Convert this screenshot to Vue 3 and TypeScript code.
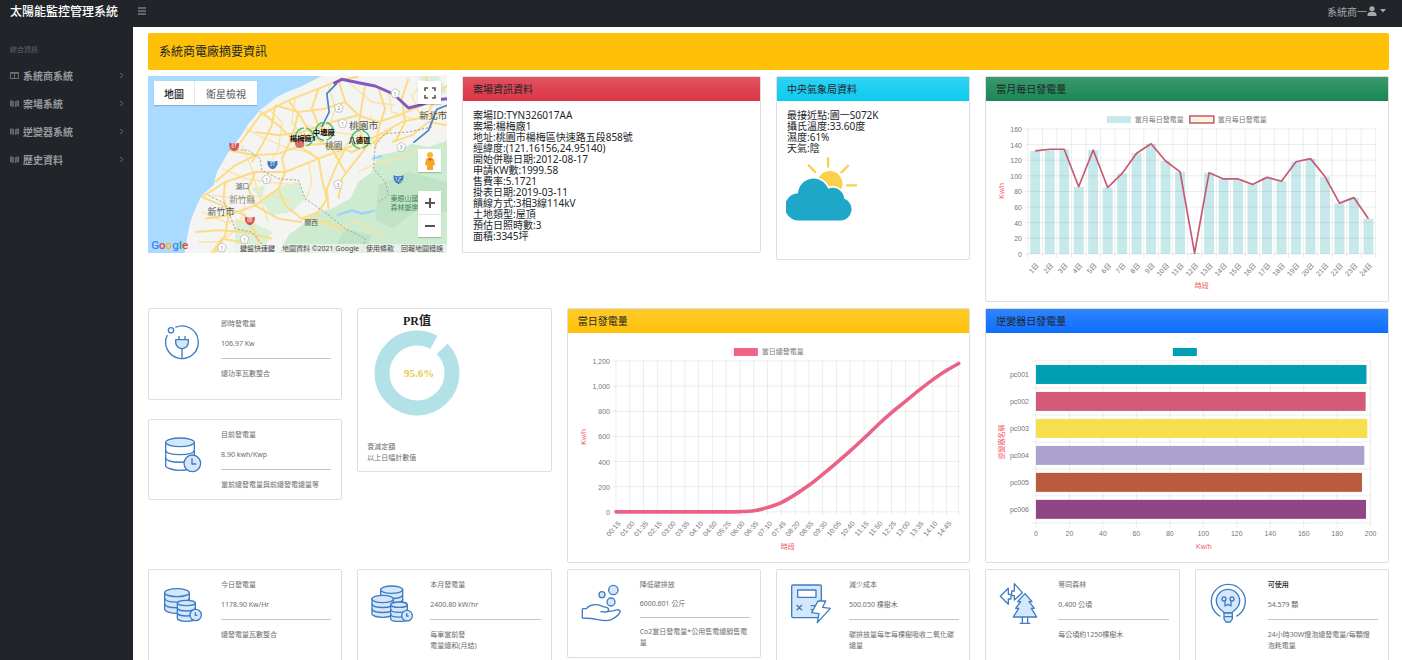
<script setup lang="ts">
import { computed } from 'vue'

interface Stat {
  icon: string
  label: string
  value: string
  note: string
  strong?: boolean
  compact?: boolean
}

const navItems = [
  { label: '系統商系統', icon: 'columns' },
  { label: '案場系統', icon: 'book' },
  { label: '逆變器系統', icon: 'book' },
  { label: '歷史資料', icon: 'book' },
]

const siteInfo = [
  '案場ID:TYN326017AA',
  '案場:楊梅廠1',
  '地址:桃園市楊梅區快速路五段858號',
  '經緯度:(121.16156,24.95140)',
  '開始併聯日期:2012-08-17',
  '申請KW數:1999.58',
  '售費率:5.1721',
  '掛表日期:2019-03-11',
  '饋線方式:3相3線114kV',
  '土地類型:屋頂',
  '預估日照時數:3',
  '面積:3345坪',
]

const weatherInfo = ['最接近點:園一S072K', '攝氏溫度:33.60度', '濕度:61%', '天氣:陰']

const liveStats: Stat[] = [
  { icon: 'plug', label: '即時發電量', value: '106.97 Kw', note: '總功率瓦數整合' },
  { icon: 'database', label: '目前發電量', value: '8.90 kwh/Kwp', note: '當前總發電量與前總發電總量等' },
]

const totals: Stat[] = [
  { icon: 'coins2', label: '今日發電量', value: '1178.90 Kw/Hr', note: '總發電量瓦數整合' },
  { icon: 'coins3', label: '本月發電量', value: '2400.80 kW/hr', note: '每單當前發\n電量總和(月結)' },
  { icon: 'hand', label: '降低碳排放', value: '6000.601 公斤', note: 'Co2當日發電量*公用售電總銷售電\n量', compact: true },
  { icon: 'calculator', label: '減少成本', value: '500.050 棵樹木', note: '碳排放量每年每棵樹吸收二氧化碳\n總量' },
  { icon: 'tree', label: '等同森林', value: '0.400 公頃', note: '每公頃約1250棵樹木' },
  { icon: 'bulb', label: '可使用', value: '54.579 顆', note: '24小時30W燈泡總發電量/每顆燈\n泡耗電量', strong: true },
]

// Monthly chart: one bar and one line point for each day
const month = { left: 42, right: 390, top: 28, bottom: 153 }
const monthValues = [132, 134, 134, 86, 133, 85, 103, 129, 141, 119, 105, 1, 104, 96, 96, 89, 98, 93, 118, 122, 99, 65, 72, 45]
const monthStep = (month.right - month.left) / monthValues.length
const monthY = (v: number) => month.bottom - (v / 160) * (month.bottom - month.top)
const monthTicks = [0, 20, 40, 60, 80, 100, 120, 140, 160]
const monthBars = monthValues.map((v, i) => ({
  label: `${i + 1}日`,
  x: month.left + i * monthStep,
  cx: month.left + (i + 0.5) * monthStep,
  y: monthY(v),
}))
const monthLine = monthBars.map((b) => `${b.cx},${b.y}`).join(' ')

// Daily chart: cumulative output by time of day
const day = { left: 48, right: 391, top: 28, bottom: 179 }
const dayLabels = [
  '00:15', '01:00', '01:35', '02:15', '03:00', '03:35', '04:10', '04:50', '05:25', '06:00', '06:35', '07:10', '07:45',
  '08:20', '08:55', '09:30', '10:05', '10:40', '11:15', '11:50', '12:25', '13:00', '13:35', '14:10', '14:45',
]
const dayValues = [0, 0, 0, 0, 0, 0, 0, 0, 0, 2, 9, 34, 74, 137, 211, 298, 390, 485, 585, 691, 789, 878, 968, 1052, 1126, 1180]
const dayStep = (day.right - day.left) / 24.87
const dayTicks = [0, 200, 400, 600, 800, 1000, 1200]
const dayX = (i: number) => Math.min(day.left + i * dayStep, day.right)
const dayY = (v: number) => day.bottom - (v / 1200) * (day.bottom - day.top)
const dayCurve = computed(() => {
  const pts = dayValues.map((v, i) => [dayX(i), dayY(v)])
  let d = `M${pts[0][0]} ${pts[0][1]}`
  for (let i = 0; i < pts.length - 1; i++) {
    const a = pts[Math.max(i - 1, 0)]
    const b = pts[i]
    const c = pts[i + 1]
    const e = pts[Math.min(i + 2, pts.length - 1)]
    d += ` C${b[0] + (c[0] - a[0]) / 6} ${b[1] + (c[1] - a[1]) / 6} ${c[0] - (e[0] - b[0]) / 6} ${c[1] - (e[1] - b[1]) / 6} ${c[0]} ${c[1]}`
  }
  return d
})

// Inverter chart: horizontal bars
const inv = { left: 50, right: 385, top: 28, bottom: 190 }
const inverters = [
  { name: 'pc001', value: 197.5, color: '#009fb1' },
  { name: 'pc002', value: 197, color: '#d45b78' },
  { name: 'pc003', value: 198, color: '#f5df4e' },
  { name: 'pc004', value: 196.2, color: '#aca2cd' },
  { name: 'pc005', value: 194.8, color: '#bb5a3f' },
  { name: 'pc006', value: 197.2, color: '#8f4684' },
]
const invTicks = [0, 20, 40, 60, 80, 100, 120, 140, 160, 180, 200]
const invX = (v: number) => inv.left + (v / 200) * (inv.right - inv.left)

// Donut: the ring leaves a gap of the missing share
const ringLength = 2 * Math.PI * 35
const ringDash = `${ringLength * 0.951} ${ringLength}`

const roads = [
  'M170 375 L240 330 L330 300 L420 300 L520 260 L600 230 L700 190 L770 150 L906 120',
  'M250 235 L330 250 L400 245 L470 220 L540 215 L620 240 L690 210 L740 170',
  'M285 213 L345 130 L430 85 L520 50 L580 25 L640 14',
  'M345 118 L400 160 L440 200 L480 235 L520 260',
  'M430 85 L470 140 L500 190 L560 230 L600 300',
  'M520 50 L500 110 L520 160 L560 200',
  'M580 25 L600 90 L640 130 L700 150 L760 130 L830 100',
  'M660 40 L650 100 L640 160 L660 230',
  'M700 50 L720 110 L700 170 L690 230',
  'M790 20 L770 80 L780 150 L750 210',
  'M600 90 L540 110 L460 120 L390 100',
  'M330 180 L400 190 L470 180 L560 150 L640 130',
  'M520 260 L530 320 L545 380 L520 420 L470 440',
  'M600 230 L570 290 L545 350 L550 410',
  'M660 230 L620 280 L590 320 L580 380',
  'M170 375 L230 400 L300 430 L330 480 L350 543',
  'M240 330 L235 380 L250 430 L240 490 L210 543',
  'M330 300 L310 350 L330 400 L400 440 L470 450',
  'M420 300 L400 350 L420 400 L470 440',
  'M180 440 L250 430 L330 400 L400 350',
  'M150 480 L220 475 L300 480 L380 500',
  'M210 330 L270 280 L330 250',
  'M390 100 L380 160 L350 220 L320 270',
  'M460 120 L440 200 L410 260 L420 300',
  'M850 120 L880 60 L906 40',
  'M830 100 L860 50 L840 12',
  'M470 440 L550 450 L600 480',
  'M200 543 L230 500 L290 510 L330 543',
  'M740 210 L800 190 L850 150 L906 160',
]
const minorRoads = [
  'M200 370 L280 380 L370 370 L450 390',
  'M230 290 L300 320 L370 330 L460 340',
  'M290 220 L320 290 L340 370 L370 450',
  'M370 110 L410 150 L400 230 L370 280',
  'M450 80 L440 150 L480 200',
  'M550 40 L570 110 L550 170',
  'M610 30 L680 90 L750 100',
  'M480 160 L560 180 L640 190 L700 210',
  'M570 260 L620 200 L680 130',
  'M490 270 L500 330 L480 390',
  'M170 420 L240 450 L330 450',
  'M160 510 L220 510 L280 470 L300 400',
  'M730 60 L740 120 L800 140',
  'M840 30 L800 70 L820 120 L880 140',
  'M300 170 L360 200 L430 230 L500 240',
  'M640 300 L700 270 L760 260 L830 230',
  'M500 425 L560 470 L640 450 L720 500',
]
const shields = [
  { x: 750, y: 64, n: '1' }, { x: 581, y: 108, n: '2' }, { x: 592, y: 154, n: '1' }, { x: 768, y: 225, n: '3' },
  { x: 364, y: 322, n: '1' }, { x: 579, y: 337, n: '3' }, { x: 298, y: 502, n: '1' }, { x: 230, y: 527, n: '1' },
]
const badges = [
  { x: 267, y: 224, n: '61', c: '#d9534f' }, { x: 382, y: 278, n: '31', c: '#3b78c4' },
  { x: 760, y: 322, n: '1乙', c: '#3b78c4' }, { x: 314, y: 446, n: '68', c: '#d9534f' },
]
</script>

<template>
  <div class="shell">
    <aside class="sidebar">
      <a class="brand" href="#">太陽能監控管理系統</a>
      <p class="nav-caption">綜合資訊</p>
      <nav>
        <a v-for="item in navItems" :key="item.label" class="nav-link" href="#">
          <svg v-if="item.icon === 'columns'" class="nav-icon" viewBox="0 0 16 16" aria-hidden="true">
            <path d="M1 2.500h14v11H1zM8 2.500v11M1 4h14" fill="none" stroke="currentColor" stroke-width="1.800" />
          </svg>
          <svg v-else class="nav-icon" viewBox="0 0 16 16" aria-hidden="true">
            <path d="M0 3q4-1 7 1v10q-3-2-7-1zM16 3q-4-1-7 1v10q3-2 7-1z" fill="currentColor" />
            <path d="M3.500 4v9M12.500 4v9" stroke="#212529" stroke-width="1" />
          </svg>
          <span>{{ item.label }}</span>
          <svg class="chevron" viewBox="0 0 8 10" aria-hidden="true">
            <path d="M2 1l4 4-4 4" fill="none" stroke="currentColor" stroke-width="1.600" />
          </svg>
        </a>
      </nav>
    </aside>

    <div class="page">
      <header class="topbar">
        <button class="icon-button" type="button" aria-label="選單">
          <svg viewBox="0 0 10 10" width="10" height="10"><path d="M1 2h8M1 5h8M1 8h8" stroke="currentColor" stroke-width="1.200" /></svg>
        </button>
        <button class="user-button" type="button">
          <span>系統商一</span>
          <svg viewBox="0 0 10 10" width="10" height="10" aria-hidden="true">
            <circle cx="5" cy="2.800" r="2.600" fill="currentColor" />
            <path d="M.5 10V8.500q0-2.300 2.500-2.500h4q2.500.2 2.500 2.500V10z" fill="currentColor" />
          </svg>
          <svg class="caret" viewBox="0 0 6 4" width="6" height="4" aria-hidden="true"><path d="M0 0h6L3 3.500z" fill="currentColor" /></svg>
        </button>
      </header>

      <main class="content">
        <h1 class="banner">系統商電廠摘要資訊</h1>

        <section class="grid">
          <div class="map span-3">
            <svg class="map-art" viewBox="8 12 898 531" preserveAspectRatio="xMidYMid slice" aria-hidden="true">
              <rect x="8" y="12" width="898" height="531" fill="#a9daff" />
              <path d="M530 12 L465 45 L430 58 L395 75 L345 114 L310 155 L285 195 L250 240 L215 300 L205 340 L170 370 L155 400 L135 450 L125 500 L118 543 H906 V12 Z" fill="#f4f4f2" />
              <path d="M906 205 L850 225 L800 215 L750 240 L700 250 L680 300 L640 330 L615 380 L560 410 L500 425 L470 460 L430 490 L400 543 H906 Z" fill="#cdebcf" />
              <path d="M400 345 L460 330 L480 380 L440 420 L380 430 L350 390 Z M270 440 L330 455 L380 480 L350 543 L270 543 Z M820 12 L880 12 L906 60 L860 80 Z M320 350 L360 340 L350 380 Z" fill="#d9f0d8" />
              <path d="M700 340 L790 300 L906 330 L906 420 L820 410 L740 470 L690 440 Z M600 470 L680 490 L660 543 L560 543 Z" fill="#bfe3c4" />
              <g fill="none" stroke="#f9e4a6" stroke-width="4">
                <path v-for="r in minorRoads" :key="r" :d="r" />
              </g>
              <g fill="none" stroke="#fbdc85" stroke-width="6" stroke-linejoin="round">
                <path v-for="r in roads" :key="r" :d="r" />
              </g>
              <g fill="none" stroke="#a5a5a5" stroke-width="3" stroke-dasharray="7 5">
                <path d="M250 232 L310 235 L345 260 L350 295 L400 320 L460 325 L480 380 L545 425 L600 470 L660 500 L650 543" />
                <path d="M860 165 L790 180 L720 185 L690 220 L685 290 L720 330 L730 370 L700 390" />
                <path d="M190 370 L240 395 L270 470 L320 480 L370 540" />
              </g>
              <path d="M575 430 L620 415 L650 425 L690 415 M680 260 l30 -8" fill="none" stroke="#9fd3f8" stroke-width="7" />
              <path d="M565 35 L590 22 L640 32 L690 42 L745 66 L790 108 L830 98 L860 85 L906 80" fill="none" stroke="#8358c4" stroke-width="9" stroke-linejoin="round" />
              <path d="M575 34 L545 65 L552 120 L530 165 M906 100 L875 112 L850 175 L805 212" fill="none" stroke="#4a7fc6" stroke-width="5" stroke-linejoin="round" />
              <g v-for="s in shields" :key="`${s.x}`">
                <path :d="`M${s.x} ${s.y - 14} l13 9 -5 17 h-16 l-5 -17 z`" fill="#fff" stroke="#a9b3a6" stroke-width="2" />
                <text :x="s.x" :y="s.y + 7" class="shield-text" fill="#777">{{ s.n }}</text>
              </g>
              <g v-for="b in badges" :key="b.n">
                <path :d="`M${b.x - 15} ${b.y - 12} q15 6 30 0 q2 20 -15 26 q-17 -6 -15 -26`" :fill="b.c" />
                <text :x="b.x" :y="b.y + 5" class="shield-text" fill="#fff">{{ b.n }}</text>
              </g>
              <g class="place">
                <text x="822" y="140" font-size="28">新北市</text>
                <text x="612" y="172" font-size="29">桃園市</text>
                <text x="540" y="230" font-size="26">桃園</text>
                <text x="272" y="352" font-size="20">湖口</text>
                <text x="252" y="392" font-size="26" fill="#8d8d8d">新竹縣</text>
                <text x="187" y="428" font-size="27">新竹市</text>
                <text x="478" y="458" font-size="20">關西</text>
                <text x="736" y="388" font-size="21" fill="#3d8a56">東眼山國</text>
                <text x="736" y="414" font-size="21" fill="#3d8a56">森林遊樂</text>
              </g>
              <g fill="none" stroke="#35c172" stroke-width="4" stroke-dasharray="36 8">
                <circle cx="478" cy="195" r="27" /><circle cx="538" cy="178" r="27" /><circle cx="646" cy="202" r="27" />
              </g>
              <circle cx="463" cy="214" r="14" fill="#d9705d" />
              <path d="M478 182 l8 18 h-16z M538 165 l8 20 h-16z M646 190 l8 18 h-16z" fill="#ef9a3c" />
              <g class="marker">
                <text x="434" y="208">楊梅廠1</text>
                <text x="503" y="189">中壢廠</text>
                <text x="610" y="213">八德區</text>
              </g>
              <text x="18" y="531" class="google">
                <tspan fill="#4285f4">G</tspan><tspan fill="#ea4335">o</tspan><tspan fill="#fbbc05">o</tspan><tspan fill="#4285f4">g</tspan><tspan fill="#34a853">l</tspan><tspan fill="#ea4335">e</tspan>
              </text>
            </svg>
            <div class="map-type">
              <button type="button" class="active">地圖</button>
              <button type="button">衛星檢視</button>
            </div>
            <div class="map-side">
              <button type="button" class="map-square" aria-label="全螢幕">
                <svg viewBox="0 0 12 12" width="12" height="12"><path d="M1 4V1h3M8 1h3v3M11 8v3H8M4 11H1V8" fill="none" stroke="#555" stroke-width="1.600" /></svg>
              </button>
              <button type="button" class="map-square pegman" aria-label="街景服務">
                <svg viewBox="0 0 12 20" width="12" height="20">
                  <circle cx="6" cy="4" r="3" fill="#fbb829" />
                  <path d="M2 8q4-2 8 0l1 6-2 .5V19H3v-4.500L1 14z" fill="#f5a623" />
                  <path d="M3.500 7.500h5L6 10z" fill="#d4572e" />
                </svg>
              </button>
              <div class="map-zoom">
                <button type="button" aria-label="放大"><svg viewBox="0 0 12 12" width="12" height="12"><path d="M6 1v10M1 6h10" stroke="#555" stroke-width="2" /></svg></button>
                <button type="button" aria-label="縮小"><svg viewBox="0 0 12 12" width="12" height="12"><path d="M1 6h10" stroke="#555" stroke-width="2" /></svg></button>
              </div>
            </div>
            <div class="map-credit">
              <button type="button">鍵盤快速鍵</button>
              <span>地圖資料 ©2021 Google</span>
              <a href="#">使用條款</a>
              <a href="#">回報地圖錯誤</a>
            </div>
          </div>

          <article class="card span-3 site-card">
            <h2 class="card-header red">案場資訊資料</h2>
            <ul class="facts">
              <li v-for="line in siteInfo" :key="line">{{ line }}</li>
            </ul>
          </article>

          <article class="card span-2 weather-card">
            <h2 class="card-header cyan">中央氣象局資料</h2>
            <ul class="facts">
              <li v-for="line in weatherInfo" :key="line">{{ line }}</li>
            </ul>
            <svg class="weather-icon" viewBox="48 254 214 192" role="img" aria-label="多雲時晴">
              <path d="M175 257v26M117 279l19 20M235 280l-20 20M232 339h28" stroke="#fccf4d" stroke-width="7" stroke-linecap="round" fill="none" />
              <circle cx="180" cy="334" r="38" fill="#fccf4d" />
              <path d="M88 445 a40 40 0 0 1 -4 -82 a47 47 0 0 1 91 -14 a34 34 0 0 1 48 30 a34 34 0 0 1 -12 66 z" fill="#1fa7c9" stroke="#fff" stroke-width="10" />
              <path d="M88 445 a40 40 0 0 1 -4 -82 a47 47 0 0 1 91 -14 a34 34 0 0 1 48 30 a34 34 0 0 1 -12 66 z" fill="#1fa7c9" />
            </svg>
          </article>

          <article class="card span-4">
            <h2 class="card-header green">當月每日發電量</h2>
            <svg class="chart" viewBox="0 0 402 200" role="img" aria-label="當月每日發電量">
              <rect x="121" y="15" width="24" height="7" fill="#c7e9ec" />
              <text x="149" y="21">當月每日發電量</text>
              <rect x="204" y="15" width="24" height="7" fill="#fff5dd" stroke="#c4566e" stroke-width="1.500" />
              <text x="232" y="21">當月每日發電量</text>
              <rect v-for="b in monthBars" :key="b.label" :x="b.cx - 5" :y="b.y" width="10" :height="month.bottom - b.y" fill="#c7e9ec" />
              <g class="lines">
                <path v-for="t in monthTicks" :key="t" :d="`M${month.left - 3} ${monthY(t)}H${month.right}`" />
                <path v-for="b in monthBars" :key="b.label" :d="`M${b.x} ${month.top}V${month.bottom + 4}`" />
                <path :d="`M${month.right} ${month.top}V${month.bottom + 4}`" />
              </g>
              <polyline :points="monthLine" fill="none" stroke="#c65a72" stroke-width="1.700" stroke-linejoin="round" />
              <g class="end">
                <text v-for="t in monthTicks" :key="t" x="36" :y="monthY(t) + 3">{{ t }}</text>
                <text v-for="b in monthBars" :key="b.label" :transform="`translate(${b.cx + 4} ${month.bottom + 12}) rotate(-48)`">{{ b.label }}</text>
              </g>
              <text class="axis" transform="translate(18 90) rotate(-90)">Kw/h</text>
              <text class="axis" x="216" y="187">時段</text>
            </svg>
          </article>
        </section>

        <section class="grid">
          <div class="stack span-2">
            <article v-for="(s, i) in liveStats" :key="s.label" class="card stat" :class="{ roomy: i === 0 }">
              <svg v-if="s.icon === 'plug'" class="stat-icon" viewBox="0 0 126 126" aria-hidden="true">
                <path d="M40 22 A49 49 0 1 1 16 45" />
                <circle cx="27" cy="31" r="8" />
                <path class="fill" d="M41 59h38v8a19 19 0 0 1-38 0z" />
                <path d="M51 48v11M69 48v11M60 86v30" />
              </svg>
              <svg v-else class="stat-icon" viewBox="0 0 126 126" aria-hidden="true">
                <path d="M11 34v70c0 6 20 14 43 14s43-8 43-14V34" />
                <path d="M11 58c4 17 82 17 86 0M11 81c4 17 82 17 86 0" />
                <ellipse class="fill" cx="54" cy="34" rx="43" ry="13" />
                <circle class="fill" cx="91" cy="97" r="25" />
                <path d="M90 82v17h13" />
              </svg>
              <div class="stat-text">
                <h3>{{ s.label }}</h3>
                <p>{{ s.value }}</p>
                <hr />
                <p>{{ s.note }}</p>
              </div>
            </article>
          </div>

          <article class="card span-2 pr-card">
            <svg class="donut" viewBox="0 0 104 108" role="img" aria-label="PR值 95.6%">
              <text x="50" y="16" class="pr-title">PR值</text>
              <circle cx="50" cy="64" r="35" fill="none" stroke="#b2e1e7" stroke-width="15" :stroke-dasharray="ringDash" transform="rotate(-44 50 64)" />
              <text x="52" y="68" class="pr-value">95.6%</text>
            </svg>
            <p>衰減定額<br />以上日幅計數值</p>
          </article>

          <article class="card span-4">
            <h2 class="card-header yellow">當日發電量</h2>
            <svg class="chart" viewBox="0 0 402 229" role="img" aria-label="當日發電量">
              <rect x="166" y="15" width="24" height="8" fill="#f06485" />
              <text x="194" y="21">當日總發電量</text>
              <g class="lines">
                <path v-for="t in dayTicks" :key="t" :d="`M${day.left - 3} ${dayY(t)}H${day.right}`" />
                <path v-for="(v, i) in dayValues" :key="i" :d="`M${dayX(i)} ${day.top}V${day.bottom + 4}`" />
              </g>
              <path :d="dayCurve" fill="none" stroke="#ea6385" stroke-width="3.600" stroke-linecap="round" />
              <g class="end">
                <text v-for="t in dayTicks" :key="t" x="42" :y="dayY(t) + 3">{{ t.toLocaleString('en-US') }}</text>
                <text v-for="(l, i) in dayLabels" :key="l" :transform="`translate(${dayX(i) + 5} ${day.bottom + 12}) rotate(-49)`">{{ l }}</text>
              </g>
              <text class="axis" transform="translate(18 104) rotate(-90)">Kw/h</text>
              <text class="axis" x="220" y="216">時段</text>
            </svg>
          </article>

          <article class="card span-4">
            <h2 class="card-header blue">逆變器日發電量</h2>
            <svg class="chart" viewBox="0 0 402 229" role="img" aria-label="逆變器日發電量">
              <rect x="187" y="15" width="24" height="8" fill="#009fb1" />
              <g class="lines">
                <path v-for="t in invTicks" :key="t" :d="`M${invX(t)} ${inv.top}V${inv.bottom + 4}`" />
                <path v-for="i in 7" :key="i" :d="`M${inv.left - 4} ${inv.top + (i - 1) * 27}H${inv.right}`" />
              </g>
              <rect v-for="(p, i) in inverters" :key="p.name" :x="inv.left" :y="inv.top + i * 27 + 4" :width="invX(p.value) - inv.left" height="19" :fill="p.color" />
              <g class="end">
                <text v-for="(p, i) in inverters" :key="p.name" x="43" :y="inv.top + i * 27 + 16">{{ p.name }}</text>
              </g>
              <g class="middle">
                <text v-for="t in invTicks" :key="t" :x="invX(t)" y="203">{{ t }}</text>
              </g>
              <text class="axis" transform="translate(18 109) rotate(-90)">逆變器名稱</text>
              <text class="axis" x="218" y="216">Kw/h</text>
            </svg>
          </article>
        </section>

        <section class="grid">
          <article v-for="s in totals" :key="s.label" class="card stat span-2" :class="s.compact ? 'compact' : 'tall'">
            <svg v-if="s.icon === 'coins2'" class="stat-icon" viewBox="0 0 126 126" aria-hidden="true">
              <path class="fill" d="M8 35v50c0 6 17 12 37 12s37-6 37-12V35z" />
              <path d="M8 52c4 15 70 15 74 0M8 69c4 15 70 15 74 0" />
              <ellipse class="fill" cx="45" cy="35" rx="37" ry="12" />
              <path class="fill" d="M46 66v46c0 5 12 9 27 9s27-4 27-9V66z" />
              <path d="M46 81c3 12 51 12 54 0M46 96c3 12 51 12 54 0" />
              <ellipse class="fill" cx="73" cy="66" rx="27" ry="8" />
              <circle class="fill" cx="101" cy="102" r="17" />
              <path d="M100 94v9h6" />
            </svg>
            <svg v-else-if="s.icon === 'coins3'" class="stat-icon" viewBox="0 0 126 126" aria-hidden="true">
              <path class="fill" d="M29 26v44c0 6 15 11 33 11s33-5 33-11V26z" />
              <path d="M29 42c4 14 62 14 66 0M29 56c4 14 62 14 66 0" />
              <ellipse class="fill" cx="62" cy="26" rx="33" ry="11" />
              <path class="fill" d="M3 54v44c0 6 14 11 32 11s32-5 32-11V54z" />
              <path d="M3 69c4 14 60 14 64 0M3 84c4 14 60 14 64 0" />
              <ellipse class="fill" cx="35" cy="54" rx="32" ry="11" />
              <path class="fill" d="M59 71v42c0 5 11 8 25 8s25-3 25-8V71z" />
              <path d="M59 86c3 11 47 11 50 0M59 100c3 11 47 11 50 0" />
              <ellipse class="fill" cx="84" cy="71" rx="25" ry="8" />
              <circle class="fill" cx="108" cy="104" r="16" />
              <path d="M107 96v9h6" />
            </svg>
            <svg v-else-if="s.icon === 'hand'" class="stat-icon" viewBox="0 0 126 126" aria-hidden="true">
              <circle class="fill" cx="97" cy="27" r="14" /><circle class="fill" cx="63" cy="41" r="9" /><circle class="fill" cx="90" cy="63" r="12" />
              <path d="M4 83h12c12-14 34-16 50-6l10 2c10 2 8 14-2 14l-16-1" />
              <path d="M80 92l20-3c8-4 16-2 18 2-4 14-14 16-22 22-10 8-30 6-44 3-16-4-32-5-48-5V83" />
            </svg>
            <svg v-else-if="s.icon === 'calculator'" class="stat-icon" viewBox="0 0 126 126" aria-hidden="true">
              <rect class="fill" x="5" y="12" width="89" height="98" rx="4" />
              <rect x="23" y="27" width="55" height="22" class="white" />
              <path d="M20 72l16 16M36 72L20 88M62 74h14M62 86h14" />
              <path class="white" d="M84 60h23l-9 19 23 3-39 43 5-27-22-3z" />
            </svg>
            <svg v-else-if="s.icon === 'tree'" class="stat-icon" viewBox="0 0 126 126" aria-hidden="true">
              <path class="white" d="M4 46l24-24v18h8v14h-8v16zM46 8l24 27-24 22V44h-8V30h8z" />
              <path class="fill" d="M78 38L56 62h9L50 82h9L43 108h70L97 82h9L90 62h9z" />
              <path d="M70 108v18M86 108v18M62 127h32" />
            </svg>
            <svg v-else class="stat-icon" viewBox="0 0 126 126" aria-hidden="true">
              <path d="M34 106A51 51 0 1 1 82 106" />
              <path class="fill" d="M45 96c0-6-23-12-23-36a35 35 0 0 1 70 0c0 24-23 30-23 36z" />
              <path class="fill" d="M45 96h25v18l-6 9H51l-6-9zM45 107h25" />
              <circle cx="45" cy="54" r="6" /><circle cx="69" cy="54" r="6" />
              <path d="M48 60v15l9-5 9 5V60" />
            </svg>
            <div class="stat-text">
              <h3 :class="{ strong: s.strong }">{{ s.label }}</h3>
              <p>{{ s.value }}</p>
              <hr />
              <p>{{ s.note }}</p>
            </div>
          </article>
        </section>
      </main>
    </div>
  </div>
</template>

<style>
body {
  margin: 0;
  background: #fff;
}
</style>

<style scoped>
.shell {
  display: grid;
  grid-template-columns: 133px minmax(0, 1fr);
  height: 100vh;
  overflow: hidden;
  font-family: "Noto Sans", "Noto Sans CJK TC", sans-serif;
  font-size: 10px;
  color: #212529;
}
h1, h2, h3, p, ul {
  margin: 0;
  padding: 0;
  font-weight: 400;
}
button {
  border: 0;
  margin: 0;
  padding: 0;
  background: none;
  font: inherit;
  color: inherit;
}
a {
  color: inherit;
  text-decoration: none;
}
.sidebar {
  background: #212529;
  color: #96989b;
}
.brand {
  display: block;
  padding-left: 10px;
  font-size: 12px;
  font-weight: 500;
  line-height: 24px;
  color: #fff;
}
.nav-caption {
  padding: 20px 10px 6px;
  font-size: 7px;
  line-height: 11px;
  color: #62666a;
}
.nav-link {
  display: flex;
  align-items: center;
  gap: 4px;
  height: 28px;
  padding: 0 9px 0 10px;
  font-weight: 700;
}
.nav-icon {
  width: 9px;
  height: 9px;
  color: #6b6f73;
}
.chevron {
  width: 5px;
  height: 7px;
  margin-left: auto;
  color: #6b6f73;
}
.page {
  display: flex;
  flex-direction: column;
  min-width: 0;
  min-height: 0;
}
.topbar {
  display: flex;
  flex: none;
  align-items: center;
  justify-content: space-between;
  height: 22px;
  padding: 0 16px 5px 4px;
  background: #212529;
  color: #a6a8aa;
}
.icon-button,
.user-button {
  display: flex;
  align-items: center;
}
.caret {
  margin-left: 3px;
}
.content {
  display: flex;
  flex: 1;
  flex-direction: column;
  gap: 6px;
  min-height: 0;
  padding: 6px 13px 0 15px;
  overflow-y: auto;
  scrollbar-width: none;
}
.banner {
  flex: none;
  padding: 0 11px;
  border-radius: 2px;
  background: #ffc107;
  font-size: 12px;
  line-height: 37px;
}
.grid {
  display: grid;
  flex: none;
  grid-template-columns: repeat(12, minmax(0, 1fr));
  column-gap: 15px;
  align-items: start;
}
.span-2 { grid-column: span 2; }
.span-3 { grid-column: span 3; }
.span-4 { grid-column: span 4; }
.card {
  box-sizing: border-box;
  border: 1px solid #dfdfdf;
  border-radius: 2px;
  background: #fff;
}
.card-header {
  padding: 0 10px;
  font-size: 10px;
  line-height: 24px;
  background-image: linear-gradient(180deg, rgba(255, 255, 255, 0.15), rgba(255, 255, 255, 0));
}
.red { background-color: #dc3545; }
.cyan { background-color: #0dcaf0; }
.green { background-color: #198754; }
.yellow { background-color: #ffc107; }
.blue { background-color: #0d6efd; }
.site-card { min-height: 177px; }
.weather-card { min-height: 184px; }
.facts {
  display: grid;
  grid-auto-rows: 11px;
  margin: 9px 10px 0;
  list-style: none;
  line-height: 11px;
  white-space: nowrap;
}
.weather-icon {
  display: block;
  width: 71px;
  height: 64px;
  margin: 3px 9px 0;
}
.chart {
  display: block;
  width: 100%;
  height: auto;
  font-family: "Liberation Sans", "Noto Sans CJK TC", sans-serif;
  font-size: 7px;
}
.chart text { fill: #777; }
.chart .axis {
  fill: #f05a64;
  text-anchor: middle;
}
.end text { text-anchor: end; }
.middle text { text-anchor: middle; }
.lines {
  fill: none;
  stroke: rgba(0, 0, 0, 0.08);
  stroke-width: 1;
}
.stack {
  display: flex;
  flex-direction: column;
  gap: 19px;
}
.stat {
  display: flex;
  gap: 17px;
  padding: 9px 10px 9px 13px;
  font-size: 7px;
  line-height: 11px;
  color: #6c6c6c;
}
.stat.roomy { min-height: 92px; }
.stat.tall { min-height: 100px; }
.stat-icon {
  flex: none;
  width: 42px;
  height: 42px;
  margin-top: 2px;
  fill: none;
  stroke: #3f7cc4;
  stroke-width: 4;
  stroke-linejoin: round;
  overflow: visible;
}
.fill { fill: #d5e7fb; }
.white { fill: #fff; }
.stat-text {
  display: flex;
  flex: 1;
  flex-direction: column;
  gap: 9px;
  min-width: 0;
  white-space: pre;
}
.compact .stat-text { gap: 8px; }
.stat-text h3 {
  font-size: 7px;
}
.stat-text .strong {
  font-weight: 500;
  color: #111;
}
.stat-text hr {
  width: 100%;
  height: 1px;
  margin: 0;
  border: 0;
  background: #c4c4c4;
}
.pr-card {
  min-height: 164px;
  padding: 0 9px;
  font-size: 7px;
  line-height: 11px;
  color: #6c6c6c;
}
.donut {
  display: block;
  width: 104px;
  height: 108px;
  margin-bottom: 24px;
  font-family: "Liberation Serif", "Noto Sans CJK TC", serif;
  font-weight: 700;
  text-anchor: middle;
}
.pr-title {
  font-size: 12px;
  fill: #222;
}
.pr-value {
  font-size: 11px;
  fill: #e2cd45;
}
.map {
  position: relative;
  height: 177px;
  overflow: hidden;
}
.map-art {
  display: block;
  width: 100%;
  height: 100%;
}
.shield-text {
  font-size: 14px;
  text-anchor: middle;
}
.place { fill: #555; }
.marker {
  font-size: 22px;
  font-weight: 700;
  fill: #111;
}
.google {
  font-family: Roboto, sans-serif;
  font-size: 35px;
  font-weight: 500;
}
.map-type {
  position: absolute;
  top: 5px;
  left: 6px;
  display: flex;
  background: #fff;
  box-shadow: 0 1px 1px rgba(0, 0, 0, 0.2);
}
.map-type button {
  height: 24px;
  padding: 0 11px;
  color: #555;
}
.map-type .active {
  padding: 0 10px;
  border-right: 1px solid #e8e8e8;
  font-weight: 500;
  color: #111;
}
.map-side {
  position: absolute;
  top: 5px;
  right: 6px;
  display: flex;
  flex-direction: column;
}
.map-square,
.map-zoom button {
  display: flex;
  align-items: center;
  justify-content: center;
  width: 23px;
  height: 23px;
  background: #fff;
}
.map-square,
.map-zoom {
  box-shadow: 0 1px 1px rgba(0, 0, 0, 0.2);
}
.pegman {
  margin: 45px 0 19px;
}
.map-zoom button + button {
  border-top: 1px solid #e4e4e4;
}
.map-credit {
  position: absolute;
  right: 0;
  bottom: 0;
  display: flex;
  gap: 7px;
  padding: 0 4px;
  background: rgba(245, 245, 245, 0.7);
  font-size: 7px;
  line-height: 9px;
  color: #444;
  white-space: nowrap;
}
</style>
